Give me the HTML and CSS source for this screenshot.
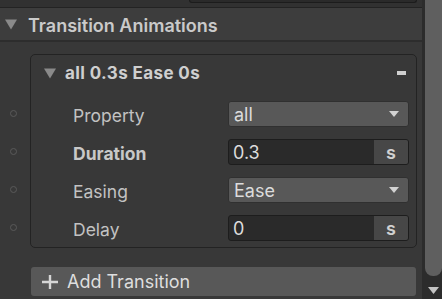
FILE: index.html
```html
<!DOCTYPE html>
<html>
<head>
<meta charset="utf-8">
<link rel="stylesheet" href="styles.css">
</head>
<body>
<div class="app">
  <div class="main">
    <div class="topbar"><div class="topfield"></div></div>
    <div class="section-header">
      <svg class="tri" width="12" height="11" viewBox="0 0 12 11"><path d="M0 0.5 H12 L6 10.5 Z" fill="#8a8a8a"/></svg>
      <span class="section-title">Transition Animations</span>
    </div>
    <div class="section-body">
      <div class="gutter">
        <div class="dot-cell"><span class="dot"></span></div>
        <div class="dot-cell"><span class="dot"></span></div>
        <div class="dot-cell"><span class="dot"></span></div>
        <div class="dot-cell"><span class="dot"></span></div>
      </div>
      <div class="card">
        <div class="card-header">
          <svg class="tri" width="12" height="11" viewBox="0 0 12 11"><path d="M0 0.5 H12 L6 10.5 Z" fill="#8a8a8a"/></svg>
          <span class="card-title">all 0.3s Ease 0s</span>
          <span class="remove" title="Remove"></span>
        </div>
        <div class="row">
          <span class="label">Property</span>
          <div class="dropdown"><span>all</span><svg width="10" height="6" viewBox="0 0 10 6"><path d="M0 0 H10 L5 6 Z" fill="#d2d2d2"/></svg></div>
        </div>
        <div class="row">
          <span class="label bold">Duration</span>
          <div class="input"><span class="value">0.3</span><span class="unit">s</span></div>
        </div>
        <div class="row">
          <span class="label">Easing</span>
          <div class="dropdown"><span>Ease</span><svg width="10" height="6" viewBox="0 0 10 6"><path d="M0 0 H10 L5 6 Z" fill="#d2d2d2"/></svg></div>
        </div>
        <div class="row">
          <span class="label">Delay</span>
          <div class="input"><span class="value">0</span><span class="unit">s</span></div>
        </div>
      </div>
      <div class="gutter-empty"></div>
      <div class="add-btn">
        <svg width="16" height="14" viewBox="0 0 16 14"><path d="M0 7 H16 M8 0 V14" stroke="#d6d6d6" stroke-width="2.4"/></svg>
        <span>Add Transition</span>
      </div>
    </div>
  </div>
  <div class="scrollbar">
    <div class="thumb"></div>
    <div class="arrow"><svg width="11" height="7" viewBox="0 0 11 7"><path d="M0 0 H11 L5.5 7 Z" fill="#c4c4c4"/></svg></div>
  </div>
</div>
</body>
</html>
```

FILE: styles.css
```css
html, body {
  margin: 0;
  padding: 0;
}
body {
  background: #383838;
  font-family: Inter, "Noto Sans", sans-serif;
  color: #c4c4c4;
  width: 442px;
  height: 299px;
  overflow: hidden;
}
.app {
  display: flex;
  height: 299px;
}
.main {
  flex: 1;
  min-width: 0;
}
.topbar {
  height: 7px;
  background: #313131;
  border-bottom: 1px solid #232323;
  display: flex;
  justify-content: flex-end;
  padding-right: 5px;
}
.topfield {
  width: 226px;
  height: 2px;
  background: #2a2a2a;
  border: 1px solid #1c1c1c;
  border-top: none;
  border-radius: 0 0 4px 4px;
}
.section-header {
  height: 32px;
  background: #3d3d3d;
  border-bottom: 2px solid #2d2d2d;
  display: flex;
  align-items: center;
  padding-left: 5px;
}
.section-title {
  margin-left: 11px;
  font-weight: 600;
  font-size: 18px;
  color: #cacaca;
  padding-top: 2px;
}
.section-body {
  display: grid;
  grid-template-columns: 30px 1fr;
  padding-top: 12px;
  padding-right: 5px;
}
.gutter {
  padding-top: 41px;
}
.dot-cell {
  height: 38px;
  display: flex;
  align-items: center;
  padding-left: 10px;
}
.dot {
  width: 5px;
  height: 5px;
  border: 1px solid #595959;
  border-radius: 50%;
  margin-top: -2px;
}
.card {
  border: 1px solid #232323;
  border-radius: 5px;
  background: #383838;
}
.card-header {
  height: 36px;
  padding: 0 10px 4px 13px;
  display: flex;
  align-items: center;
}
.card-title {
  margin-left: 9px;
  font-weight: 700;
  font-size: 17px;
  letter-spacing: 0.4px;
  color: #cfcfcf;
  flex: 1;
}
.remove {
  width: 9px;
  height: 4px;
  background: #cfcfcf;
}
.row {
  height: 38px;
  display: flex;
  align-items: center;
}
.label {
  width: 197px;
  flex: none;
  padding-left: 42px;
  box-sizing: border-box;
  font-size: 17.5px;
  color: #c2c2c2;
  padding-top: 3px;
}
.label.bold {
  font-weight: 700;
  color: #c8c8c8;
}
.dropdown {
  width: 181px;
  height: 26px;
  box-sizing: border-box;
  background: #585858;
  border: 1px solid #303030;
  border-radius: 3px;
  display: flex;
  align-items: center;
  justify-content: space-between;
  padding: 0 9px 0 5px;
  font-size: 18px;
  color: #dcdcdc;
}
.input {
  width: 181px;
  height: 26px;
  box-sizing: border-box;
  background: #2a2a2a;
  border: 1px solid #1d1d1d;
  border-radius: 3px;
  display: flex;
  overflow: hidden;
  font-size: 18px;
  color: #dcdcdc;
}
.value {
  flex: 1;
  display: flex;
  align-items: center;
  padding-left: 4px;
}
.unit {
  width: 34px;
  background: #474747;
  display: flex;
  align-items: center;
  justify-content: center;
  font-weight: 600;
  color: #d0d0d0;
}
.add-btn {
  grid-column: 2;
  margin: 19px 1px 0 1px;
  height: 29px;
  box-sizing: border-box;
  background: #585858;
  border-radius: 3px;
  display: flex;
  align-items: center;
  padding-left: 11px;
  font-size: 18px;
  color: #dedede;
}
.add-btn span {
  margin-left: 9px;
}
.gutter-empty {
  grid-column: 1;
}
.scrollbar {
  width: 20px;
  background: #2c2c2c;
  display: flex;
  flex-direction: column;
}
.thumb {
  margin-left: 3px;
  height: 276px;
  background: #5f5f5f;
  border-radius: 0 0 8px 8px;
}
.arrow {
  flex: 1;
  display: flex;
  justify-content: center;
  padding-left: 3px;
  padding-top: 11px;
}
.arrow svg {
  display: block;
}
```
